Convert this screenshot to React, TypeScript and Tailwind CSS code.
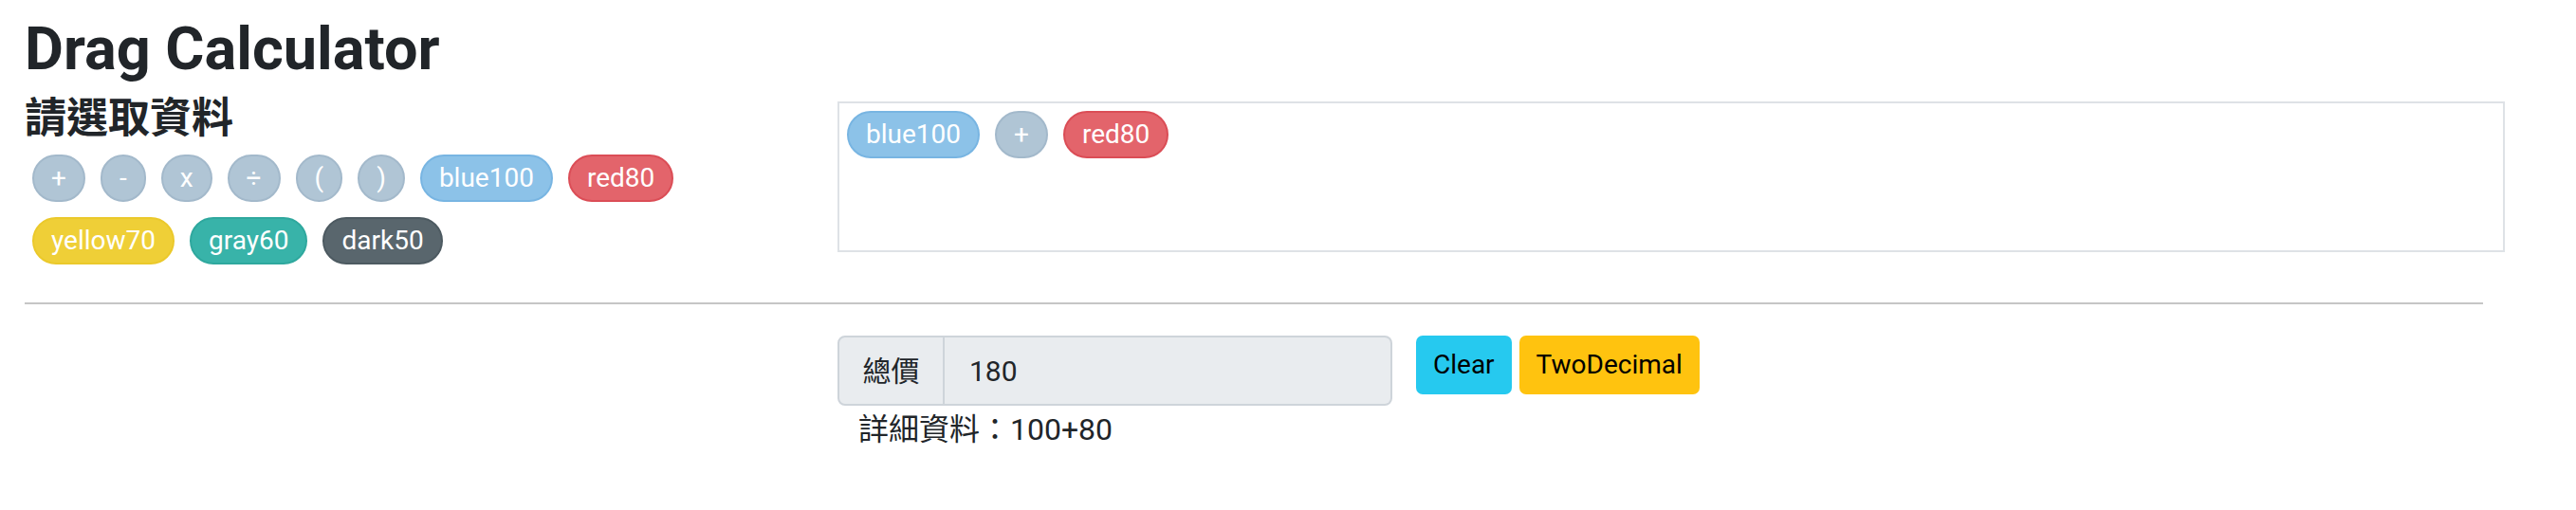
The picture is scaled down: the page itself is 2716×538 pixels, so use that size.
import React from "react";

type Chip = { id: string; text: string; tone: "op" | "blue" | "red" | "yellow" | "teal" | "dark" };

const palette: Record<Chip["tone"], string> = {
  op: "bg-[#b0c5d5] border-[#a3b9cb]",
  blue: "bg-[#8cc2e8] border-[#78b5e2]",
  red: "bg-[#e3646b] border-[#db4d56]",
  yellow: "bg-[#efcf37] border-[#ebc92b]",
  teal: "bg-[#38b3a9] border-[#2fa89e]",
  dark: "bg-[#59666d] border-[#4d5a61]",
};

const source: Chip[] = [
  { id: "add", text: "+", tone: "op" },
  { id: "sub", text: "-", tone: "op" },
  { id: "mul", text: "x", tone: "op" },
  { id: "div", text: "÷", tone: "op" },
  { id: "lp", text: "(", tone: "op" },
  { id: "rp", text: ")", tone: "op" },
  { id: "blue", text: "blue100", tone: "blue" },
  { id: "red", text: "red80", tone: "red" },
  { id: "yellow", text: "yellow70", tone: "yellow" },
  { id: "gray", text: "gray60", tone: "teal" },
  { id: "dark", text: "dark50", tone: "dark" },
];

const picked: Chip[] = [
  { id: "p1", text: "blue100", tone: "blue" },
  { id: "p2", text: "+", tone: "op" },
  { id: "p3", text: "red80", tone: "red" },
];

function Pill({ chip }: { chip: Chip }) {
  return (
    <div
      className={`m-2 flex h-[50px] items-center rounded-full border-2 px-[18px] text-[28px] leading-none text-white ${palette[chip.tone]}`}
    >
      {chip.text}
    </div>
  );
}

export default function App() {
  return (
    <div className="min-h-[538px] bg-white px-[26px] pt-4 font-[Roboto,'Noto_Sans_CJK_TC',sans-serif] text-[#212529]">
      <h1 className="text-[63px] font-bold leading-[72px]">Drag Calculator</h1>

      <div className="mt-[14px] flex">
        <div className="w-[857px] shrink-0">
          <h3 className="text-[44px] font-bold leading-[47px]">請選取資料</h3>
          <div className="mt-[6px] flex flex-wrap">
            {source.map((c) => (
              <Pill key={c.id} chip={c} />
            ))}
          </div>
        </div>

        <div className="mt-[5px] flex h-[159px] w-[1758px] flex-wrap content-start border-2 border-[#dee2e6]">
          {picked.map((c) => (
            <Pill key={c.id} chip={c} />
          ))}
        </div>
      </div>

      <hr className="mt-8 h-0 w-[2592px] border-0 border-t-2 border-[#c6c6c6]" />

      <div className="ml-[857px] mt-[33px] flex items-start">
        <div className="flex h-[74px] w-[585px]">
          <div className="flex w-[113px] items-center justify-center rounded-l-[8px] border-2 border-[#ced4da] bg-[#e9ecef] text-[30px]">
            總價
          </div>
          <input
            readOnly
            value="180"
            className="min-w-0 flex-1 rounded-r-[8px] border-2 border-l-0 border-[#ced4da] bg-[#e9ecef] pl-[26px] text-[30px] text-[#212529] outline-none"
          />
        </div>
        <button
          type="button"
          className="ml-[25px] h-[62px] rounded-[7px] bg-[#26c9ef] px-[18px] text-[28px] text-black"
        >
          Clear
        </button>
        <button
          type="button"
          className="ml-2 h-[62px] rounded-[7px] bg-[#ffc30f] px-[18px] text-[28px] text-black"
        >
          TwoDecimal
        </button>
      </div>

      <div className="ml-[857px] mt-[3px] pl-[22px] text-[32px] leading-[44px]">詳細資料：100+80</div>
    </div>
  );
}
